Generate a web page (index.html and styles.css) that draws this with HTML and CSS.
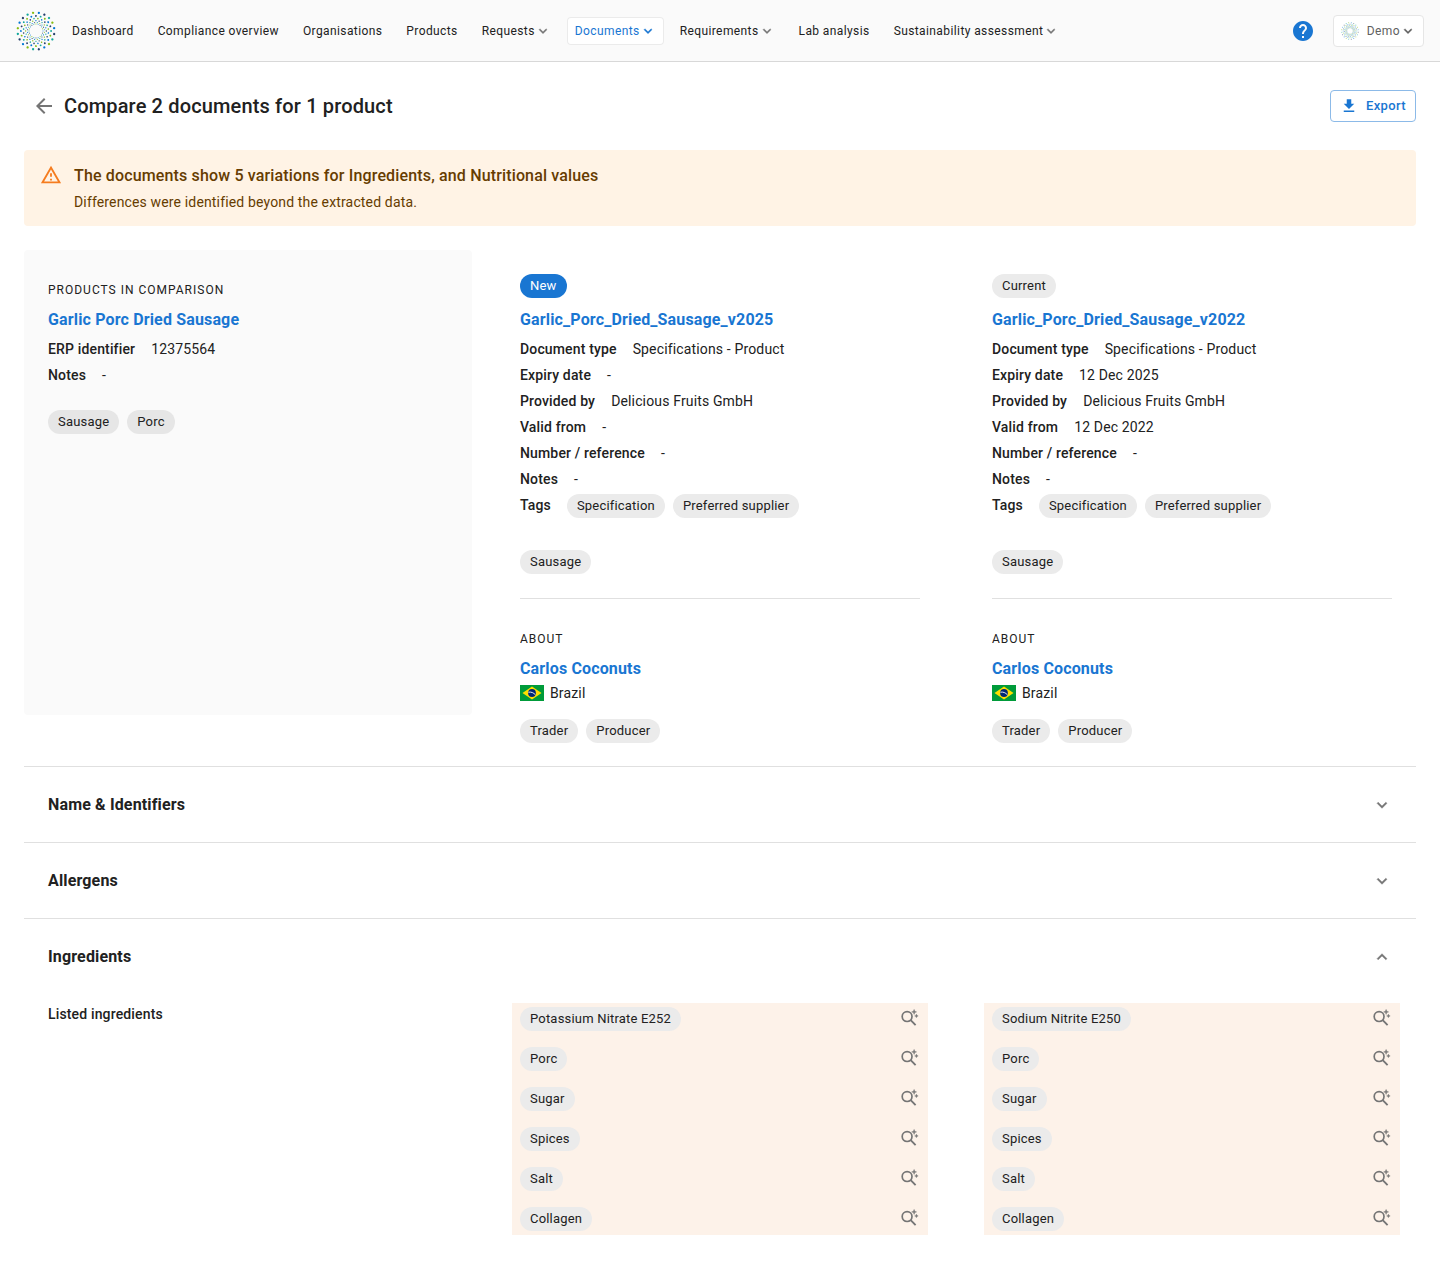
FILE: index.html
```html
<!DOCTYPE html>
<html lang="en">
	<head>
		<meta charset="utf-8">
		<title>Compare documents</title>
		<link rel="stylesheet" href="styles.css">
	</head>
	<body>
		<!-- shared icons -->
		<svg class="sprite" aria-hidden="true">
			<symbol id="logo" viewBox="0 0 40 40">
				<g id="ring" fill="none" stroke-width="2.3" stroke-linecap="round">
					<circle cx="20" cy="20" r="18.4" pathLength="20" stroke-dasharray="0 4" stroke="#0077d4" transform="rotate(-81 20 20)"/>
					<circle cx="20" cy="20" r="18.4" pathLength="20" stroke-dasharray="0 4" stroke="#253f6b" transform="rotate(-63 20 20)"/>
					<circle cx="20" cy="20" r="18.4" pathLength="20" stroke-dasharray="0 4" stroke="#12a79c" transform="rotate(-45 20 20)"/>
					<circle cx="20" cy="20" r="18.4" pathLength="20" stroke-dasharray="0 4" stroke="#86bc10" transform="rotate(-27 20 20)"/>
				</g>
				<use href="#ring" transform="rotate(45 20 20) translate(3.6 3.6) scale(.82)"/>
				<use href="#ring" transform="rotate(18 20 20) translate(6.4 6.4) scale(.68)"/>
				<use href="#ring" transform="rotate(63 20 20) translate(8.8 8.8) scale(.56)"/>
				<use href="#ring" transform="rotate(36 20 20) translate(10.8 10.8) scale(.46)"/>
				<use href="#ring" transform="rotate(81 20 20) translate(12.4 12.4) scale(.38)"/>
			</symbol>
			<symbol id="chevron" viewBox="0 0 24 24">
				<path d="M7.41 8.59 12 13.17l4.59-4.58L18 10l-6 6-6-6z" stroke="currentColor" stroke-width=".5"/>
			</symbol>
			<symbol id="search-spark" viewBox=".5 1 20 20">
				<circle cx="7.6" cy="8.6" r="4.9" fill="none" stroke="currentColor" stroke-width="1.7"/>
				<path d="m11.2 12.2 4.9 4.9" fill="none" stroke="currentColor" stroke-width="1.9"/>
				<path d="m14.6 1.4.7 1.8 1.8.7-1.8.7-.7 1.8-.7-1.8-1.8-.7 1.8-.7zM16.9 6.1l.5 1.3 1.3.5-1.3.5-.5 1.3-.5-1.3-1.3-.5 1.3-.5z" stroke="currentColor" stroke-width=".4"/>
			</symbol>
			<symbol id="brazil" viewBox="0 0 24 16">
				<path fill="#009b3a" d="M0 0h24v16H0z"/>
				<path fill="#fedf00" d="m12 1.5 9.5 6.5-9.5 6.5L2.5 8z"/>
				<circle cx="12" cy="8" r="3.9" fill="#002776"/>
				<path d="M8.4 7.2c2.7-.5 5.2.5 7 2.6" fill="none" stroke="#fff" stroke-width=".9"/>
			</symbol>
		</svg>

		<header class="topbar">
			<a class="logo" href="#" aria-label="Home"><svg><use href="#logo"/></svg></a>
			<nav class="nav">
				<a href="#">Dashboard</a>
				<a href="#">Compliance overview</a>
				<a href="#">Organisations</a>
				<a href="#">Products</a>
				<button type="button">Requests<svg class="caret"><use href="#chevron"/></svg></button>
				<button type="button" class="active">Documents<svg class="caret"><use href="#chevron"/></svg></button>
				<button type="button">Requirements<svg class="caret"><use href="#chevron"/></svg></button>
				<a href="#">Lab analysis</a>
				<button type="button">Sustainability assessment<svg class="caret"><use href="#chevron"/></svg></button>
			</nav>
			<button type="button" class="help" aria-label="Help">
				<svg viewBox="0 0 24 24"><path d="M12 2C6.48 2 2 6.48 2 12s4.48 10 10 10 10-4.48 10-10S17.52 2 12 2zm1 17h-2v-2h2v2zm2.07-7.75-.9.92C13.45 12.9 13 13.5 13 15h-2v-.5c0-1.1.45-2.1 1.17-2.83l1.24-1.26c.37-.36.59-.86.59-1.41 0-1.1-.9-2-2-2s-2 .9-2 2H8c0-2.21 1.79-4 4-4s4 1.79 4 4c0 .88-.36 1.68-.93 2.25z"/></svg>
			</button>
			<button type="button" class="account"><svg class="avatar"><use href="#logo"/></svg>Demo<svg class="caret"><use href="#chevron"/></svg></button>
		</header>

		<main>
			<div class="page-head">
				<button type="button" class="back" aria-label="Back">
					<svg viewBox="0 0 24 24"><path d="M20 11H7.83l5.59-5.59L12 4l-8 8 8 8 1.41-1.41L7.83 13H20v-2z"/></svg>
				</button>
				<h1>Compare 2 documents for 1 product</h1>
				<button type="button" class="export">
					<svg viewBox="0 0 24 24"><path d="M19 9h-4V3H9v6H5l7 7 7-7zM5 18v2h14v-2H5z"/></svg>
					Export
				</button>
			</div>

			<div class="alert" role="alert">
				<svg viewBox="0 0 24 24"><path d="M12 5.99 19.53 19H4.47L12 5.99M12 2 1 21h22L12 2zm1 14h-2v2h2v-2zm0-6h-2v4h2v-4z"/></svg>
				<div>
					<h2>The documents show 5 variations for Ingredients, and Nutritional values</h2>
					<p>Differences were identified beyond the extracted data.</p>
				</div>
			</div>

			<section class="compare">
				<div class="col product">
					<p class="overline">Products in comparison</p>
					<a class="title" href="#">Garlic Porc Dried Sausage</a>
					<dl class="details">
						<div><dt>ERP identifier</dt><dd>12375564</dd></div>
						<div><dt>Notes</dt><dd>-</dd></div>
					</dl>
					<div class="chips"><span class="chip">Sausage</span><span class="chip">Porc</span></div>
				</div>

				<div class="col">
					<div class="status"><span class="chip new">New</span></div>
					<a class="title" href="#">Garlic_Porc_Dried_Sausage_v2025</a>
					<dl class="details">
						<div><dt>Document type</dt><dd>Specifications - Product</dd></div>
						<div><dt>Expiry date</dt><dd>-</dd></div>
						<div><dt>Provided by</dt><dd>Delicious Fruits GmbH</dd></div>
						<div><dt>Valid from</dt><dd>-</dd></div>
						<div><dt>Number / reference</dt><dd>-</dd></div>
						<div><dt>Notes</dt><dd>-</dd></div>
						<div><dt>Tags</dt><dd class="tags"><span class="chip">Specification</span><span class="chip">Preferred supplier</span></dd></div>
					</dl>
					<div class="chips categories"><span class="chip">Sausage</span></div>
					<div class="about">
						<p class="overline">About</p>
						<a class="title" href="#">Carlos Coconuts</a>
						<p class="country"><svg><use href="#brazil"/></svg>Brazil</p>
						<div class="chips roles"><span class="chip">Trader</span><span class="chip">Producer</span></div>
					</div>
				</div>

				<div class="col">
					<div class="status"><span class="chip">Current</span></div>
					<a class="title" href="#">Garlic_Porc_Dried_Sausage_v2022</a>
					<dl class="details">
						<div><dt>Document type</dt><dd>Specifications - Product</dd></div>
						<div><dt>Expiry date</dt><dd>12 Dec 2025</dd></div>
						<div><dt>Provided by</dt><dd>Delicious Fruits GmbH</dd></div>
						<div><dt>Valid from</dt><dd>12 Dec 2022</dd></div>
						<div><dt>Number / reference</dt><dd>-</dd></div>
						<div><dt>Notes</dt><dd>-</dd></div>
						<div><dt>Tags</dt><dd class="tags"><span class="chip">Specification</span><span class="chip">Preferred supplier</span></dd></div>
					</dl>
					<div class="chips categories"><span class="chip">Sausage</span></div>
					<div class="about">
						<p class="overline">About</p>
						<a class="title" href="#">Carlos Coconuts</a>
						<p class="country"><svg><use href="#brazil"/></svg>Brazil</p>
						<div class="chips roles"><span class="chip">Trader</span><span class="chip">Producer</span></div>
					</div>
				</div>
			</section>

			<section class="group">
				<h3><button type="button" aria-expanded="false">Name &amp; Identifiers<svg class="caret"><use href="#chevron"/></svg></button></h3>
			</section>
			<section class="group">
				<h3><button type="button" aria-expanded="false">Allergens<svg class="caret"><use href="#chevron"/></svg></button></h3>
			</section>
			<section class="group">
				<h3><button type="button" aria-expanded="true">Ingredients<svg class="caret"><use href="#chevron"/></svg></button></h3>
				<div class="row">
					<h4>Listed ingredients</h4>
					<ul class="diff">
						<li><span class="chip">Potassium Nitrate E252</span><button type="button" aria-label="Find in document"><svg><use href="#search-spark"/></svg></button></li>
						<li><span class="chip">Porc</span><button type="button" aria-label="Find in document"><svg><use href="#search-spark"/></svg></button></li>
						<li><span class="chip">Sugar</span><button type="button" aria-label="Find in document"><svg><use href="#search-spark"/></svg></button></li>
						<li><span class="chip">Spices</span><button type="button" aria-label="Find in document"><svg><use href="#search-spark"/></svg></button></li>
						<li><span class="chip">Salt</span><button type="button" aria-label="Find in document"><svg><use href="#search-spark"/></svg></button></li>
						<li><span class="chip">Collagen</span><button type="button" aria-label="Find in document"><svg><use href="#search-spark"/></svg></button></li>
					</ul>
					<ul class="diff">
						<li><span class="chip">Sodium Nitrite E250</span><button type="button" aria-label="Find in document"><svg><use href="#search-spark"/></svg></button></li>
						<li><span class="chip">Porc</span><button type="button" aria-label="Find in document"><svg><use href="#search-spark"/></svg></button></li>
						<li><span class="chip">Sugar</span><button type="button" aria-label="Find in document"><svg><use href="#search-spark"/></svg></button></li>
						<li><span class="chip">Spices</span><button type="button" aria-label="Find in document"><svg><use href="#search-spark"/></svg></button></li>
						<li><span class="chip">Salt</span><button type="button" aria-label="Find in document"><svg><use href="#search-spark"/></svg></button></li>
						<li><span class="chip">Collagen</span><button type="button" aria-label="Find in document"><svg><use href="#search-spark"/></svg></button></li>
					</ul>
				</div>
			</section>
		</main>
	</body>
</html>
```
FILE: styles.css
```css
*{
	margin:0;
	padding:0;
	box-sizing:border-box;
}
body{
	font-family:Roboto, "Liberation Sans", sans-serif;
	font-size:14px;
	line-height:20px;
	letter-spacing:0.01071em;
	color:#212121;
	background:#fff;
}
button{
	font:inherit;
	letter-spacing:inherit;
	color:inherit;
	background:none;
	border:0;
	cursor:pointer;
}
a{
	color:inherit;
	text-decoration:none;
}
ul{
	list-style:none;
}
svg{
	display:block;
	flex:none;
	fill:currentColor;
}
.sprite{
	position:absolute;
	width:0;
	height:0;
}
.caret{
	width:16px;
	height:16px;
	color:#757575;
}

/* top bar */
.topbar{
	display:flex;
	align-items:center;
	min-height:62px;
	padding:0 16px;
	background:#fafafa;
	border-bottom:1px solid #d8d8d8;
}
.logo svg{
	width:40px;
	height:40px;
}
.nav{
	display:flex;
	flex:1;
	gap:8px;
	margin-left:8px;
	font-size:12px;
	letter-spacing:0.03333em;
}
.nav a,.nav button{
	display:flex;
	align-items:center;
	height:28px;
	padding:0 8px;
	border-radius:4px;
	white-space:nowrap;
}
.nav .active{
	color:#1976d2;
	background:#fff;
	box-shadow:inset 0 0 0 1px #ebebeb;
}
.nav .active .caret{
	color:#1976d2;
}
.help{
	margin-right:18px;
	color:#1976d2;
}
.help svg{
	width:24px;
	height:24px;
}
.account{
	display:flex;
	align-items:center;
	height:32px;
	padding:0 7px;
	border:1px solid #e6e6e6;
	border-radius:4px;
	background:#fff;
	color:#616161;
	font-size:12px;
	letter-spacing:0.03333em;
}
.account .caret{
	color:#616161;
}
.avatar{
	width:18px;
	height:18px;
	margin-right:8px;
	opacity:.6;
}

main{
	padding:28px 24px;
}

/* page heading */
.page-head{
	display:flex;
	align-items:center;
	padding-left:8px;
}
.back{
	margin-right:8px;
	color:#757575;
}
.back svg{
	width:24px;
	height:24px;
}
h1{
	flex:1;
	font-size:20px;
	line-height:32px;
	font-weight:500;
	letter-spacing:0.0075em;
}
.export{
	display:flex;
	align-items:center;
	gap:8px;
	height:32px;
	padding:0 9px;
	border:1px solid #8cbae8;
	border-radius:4px;
	color:#1976d2;
	font-size:13px;
	font-weight:500;
	letter-spacing:0.02857em;
}
.export svg{
	width:18px;
	height:18px;
}

.alert{
	display:flex;
	gap:12px;
	margin:28px 0 24px;
	padding:14px 16px;
	border-radius:4px;
	background:#fff3e5;
	color:#663c00;
}
.alert svg{
	width:22px;
	height:22px;
	color:#f57c1f;
}
.alert h2{
	font-size:16px;
	line-height:24px;
	font-weight:500;
	letter-spacing:0.00938em;
}
.alert p{
	margin-top:4px;
}

/* compared items */
.compare,.row{
	display:grid;
	grid-template-columns:repeat(3, 1fr);
	column-gap:24px;
}
.compare{
	margin-bottom:-1px;
}
.col{
	padding:24px;
}
.product{
	margin-bottom:52px;
	border-radius:4px;
	background:#fafafa;
}
.overline{
	margin-bottom:2px;
	font-size:12px;
	line-height:32px;
	letter-spacing:0.08333em;
	text-transform:uppercase;
}
.status{
	display:flex;
	align-items:flex-start;
	height:32px;
	margin-bottom:2px;
}
.title{
	display:block;
	font-size:16px;
	line-height:24px;
	font-weight:700;
	letter-spacing:0.00938em;
	color:#1976d2;
}
.details{
	margin-top:4px;
}
.details div{
	display:flex;
	align-items:center;
	gap:16px;
	min-height:26px;
}
dt{
	font-weight:500;
}
.chips,.tags{
	display:flex;
	flex-wrap:wrap;
	gap:8px;
}
.tags{
	padding-top:2px;
}
.chip{
	display:inline-flex;
	align-items:center;
	height:24px;
	padding:0 10px;
	border-radius:12px;
	background:#ebebeb;
	font-size:13px;
	letter-spacing:0.015em;
	white-space:nowrap;
}
.product .chip{
	background:#e6e6e6;
}
.chip.new{
	background:#1976d2;
	color:#fff;
}
.product .chips{
	margin-top:22px;
}
.categories{
	margin-top:32px;
}
.about{
	margin-top:24px;
	padding-top:24px;
	border-top:1px solid #e0e0e0;
}
.country{
	display:flex;
	align-items:center;
	gap:6px;
	margin-top:2px;
}
.country svg{
	width:24px;
	height:16px;
}
.roles{
	margin-top:16px;
}

/* collapsible groups */
.group{
	border-top:1px solid #e0e0e0;
}
.group h3{
	font-size:16px;
	line-height:24px;
	font-weight:700;
	letter-spacing:0.00938em;
}
.group h3 button{
	display:flex;
	align-items:center;
	justify-content:space-between;
	width:100%;
	height:75px;
	padding:0 24px;
}
.group h3 .caret{
	width:20px;
	height:20px;
}
.group [aria-expanded="true"] .caret{
	transform:rotate(180deg);
}
.row{
	padding:9px 0;
}
.row h4{
	padding-left:24px;
	font-size:14px;
	line-height:22px;
	font-weight:500;
}
.diff{
	display:flex;
	flex-direction:column;
	gap:8px;
	margin:0 16px;
	background:#fdf2e9;
}
.diff li{
	display:flex;
	align-items:center;
	justify-content:space-between;
	height:32px;
	padding:0 8px;
}
.diff button{
	color:#757575;
}
.diff button svg{
	width:20px;
	height:20px;
}
```
